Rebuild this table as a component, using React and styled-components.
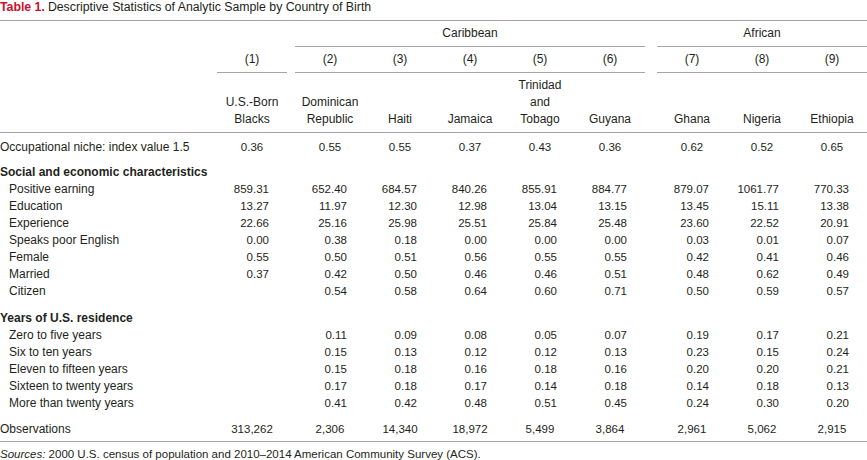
import React from "react";
import styled, { createGlobalStyle } from "styled-components";

const GlobalStyle = createGlobalStyle`
  * { box-sizing: border-box; }
  body {
    margin: 0;
    background: #ffffff;
    color: #231f20;
    font-family: "Liberation Sans", Arial, sans-serif;
  }
`;

const RULE = "1px solid #a6a6a6";
const COLUMNS = "217px 70px 8px repeat(5, 70px) 12px repeat(3, 70px)";

const Page = styled.div`
  width: 867px;
  height: 460px;
  overflow: hidden;
  background: #fff;
`;

const Title = styled.div`
  font-size: 12.3px;
  line-height: 14px;
  height: 21px;
  padding-bottom: 6px;
  border-bottom: ${RULE};
  white-space: nowrap;
`;

const TableLabel = styled.span`
  color: #c8102e;
  font-weight: 700;
  margin-right: 3px;
`;

const Row = styled.div`
  display: grid;
  grid-template-columns: ${COLUMNS};
  align-items: end;
  font-size: 12px;
  line-height: 17px;
  padding-top: ${(p) => p.$top || 0}px;
  padding-bottom: ${(p) => p.$bottom || 0}px;
  border-bottom: ${(p) => (p.$rule ? RULE : "none")};
  height: ${(p) => (p.$h ? `${p.$h}px` : "auto")};
`;

const HeadCell = styled.div`
  grid-column: span ${(p) => p.$span || 1};
  text-align: center;
  height: 26px;
  line-height: 25px;
  border-bottom: ${(p) => (p.$rule ? RULE : "none")};
`;

const NameCell = styled.div`
  display: flex;
  flex-direction: column;
  justify-content: flex-end;
  align-items: center;
  height: 59px;
  padding-bottom: 4px;
`;

const Label = styled.div`
  padding-left: ${(p) => (p.$indent ? 9 : 0)}px;
  font-weight: ${(p) => (p.$bold ? 700 : 400)};
  white-space: nowrap;
`;

const Num = styled.div`
  font-size: 11.5px;
  padding-right: ${(p) => (p.$center ? 0 : 18)}px;
  text-align: ${(p) => (p.$center ? "center" : "right")};
  white-space: nowrap;
`;

const Gap = styled.div``;

const Sources = styled.div`
  font-size: 11.5px;
  line-height: 17px;
  padding-top: 4px;
  white-space: nowrap;
`;

const names = [
  ["U.S.-Born", "Blacks"],
  ["Dominican", "Republic"],
  ["Haiti"],
  ["Jamaica"],
  ["Trinidad", "and", "Tobago"],
  ["Guyana"],
  ["Ghana"],
  ["Nigeria"],
  ["Ethiopia"],
];

const niche = ["0.36", "0.55", "0.55", "0.37", "0.43", "0.36", "0.62", "0.52", "0.65"];

const social = [
  ["Positive earning", ["859.31", "652.40", "684.57", "840.26", "855.91", "884.77", "879.07", "1061.77", "770.33"]],
  ["Education", ["13.27", "11.97", "12.30", "12.98", "13.04", "13.15", "13.45", "15.11", "13.38"]],
  ["Experience", ["22.66", "25.16", "25.98", "25.51", "25.84", "25.48", "23.60", "22.52", "20.91"]],
  ["Speaks poor English", ["0.00", "0.38", "0.18", "0.00", "0.00", "0.00", "0.03", "0.01", "0.07"]],
  ["Female", ["0.55", "0.50", "0.51", "0.56", "0.55", "0.55", "0.42", "0.41", "0.46"]],
  ["Married", ["0.37", "0.42", "0.50", "0.46", "0.46", "0.51", "0.48", "0.62", "0.49"]],
  ["Citizen", ["", "0.54", "0.58", "0.64", "0.60", "0.71", "0.50", "0.59", "0.57"]],
];

const years = [
  ["Zero to five years", ["", "0.11", "0.09", "0.08", "0.05", "0.07", "0.19", "0.17", "0.21"]],
  ["Six to ten years", ["", "0.15", "0.13", "0.12", "0.12", "0.13", "0.23", "0.15", "0.24"]],
  ["Eleven to fifteen years", ["", "0.15", "0.18", "0.16", "0.18", "0.16", "0.20", "0.20", "0.21"]],
  ["Sixteen to twenty years", ["", "0.17", "0.18", "0.17", "0.14", "0.18", "0.14", "0.18", "0.13"]],
  ["More than twenty years", ["", "0.41", "0.42", "0.48", "0.51", "0.45", "0.24", "0.30", "0.20"]],
];

const observations = ["313,262", "2,306", "14,340", "18,972", "5,499", "3,864", "2,961", "5,062", "2,915"];

// spacer columns sit after column 1 and after column 6
const withGaps = (cells, make) => {
  const out = [];
  cells.forEach((c, i) => {
    out.push(make(c, i));
    if (i === 0) out.push(<Gap key="g1" />);
    if (i === 5) out.push(<Gap key="g2" />);
  });
  return out;
};

function DataRow({ label, values, center, top, bottom, rule }) {
  return (
    <Row $top={top} $bottom={bottom} $rule={rule}>
      <Label $indent={!center}>{label}</Label>
      {withGaps(values, (v, i) => (
        <Num key={i} $center={center}>{v}</Num>
      ))}
    </Row>
  );
}

export default function App() {
  return (
    <Page>
      <GlobalStyle />
      <Title>
        <TableLabel>Table 1.</TableLabel>Descriptive Statistics of Analytic Sample by Country of Birth
      </Title>

      <Row>
        <HeadCell />
        <HeadCell />
        <Gap />
        <HeadCell $span={5} $rule>Caribbean</HeadCell>
        <Gap />
        <HeadCell $span={3} $rule>African</HeadCell>
      </Row>
      <Row>
        <HeadCell />
        {withGaps(names, (_, i) => (
          <HeadCell key={i} $rule>({i + 1})</HeadCell>
        ))}
      </Row>
      <Row $rule $h={60}>
        <NameCell />
        {withGaps(names, (n, i) => (
          <NameCell key={i}>
            {n.map((line) => (
              <span key={line}>{line}</span>
            ))}
          </NameCell>
        ))}
      </Row>

      <DataRow label="Occupational niche: index value 1.5" values={niche} center top={6} />

      <Row $top={8}>
        <Label $bold>Social and economic characteristics</Label>
      </Row>
      {social.map(([label, values]) => (
        <DataRow key={label} label={label} values={values} />
      ))}

      <Row $top={10}>
        <Label $bold>Years of U.S. residence</Label>
      </Row>
      {years.map(([label, values]) => (
        <DataRow key={label} label={label} values={values} />
      ))}

      <DataRow label="Observations" values={observations} center top={9} bottom={3} rule />

      <Sources>
        <em>Sources:</em> 2000 U.S. census of population and 2010–2014 American Community Survey (ACS).
      </Sources>
    </Page>
  );
}
